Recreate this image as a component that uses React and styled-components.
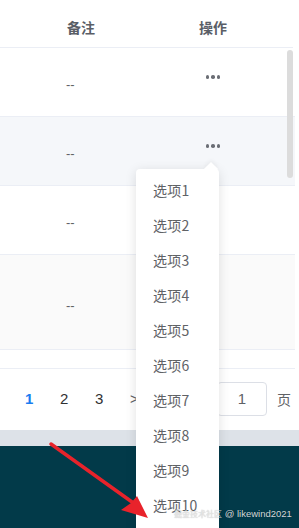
import React from "react";
import styled, { createGlobalStyle } from "styled-components";

const Global = createGlobalStyle`
  html, body { margin: 0; padding: 0; background: #fff; }
  body { width: 299px; height: 528px; overflow: hidden; font-family: "Noto Sans CJK SC", "Noto Sans", sans-serif; }
`;

const Page = styled.div`
  position: relative;
  width: 299px;
  height: 528px;
  overflow: hidden;
  display: flex;
  flex-direction: column;
`;

const Table = styled.div`
  position: relative;
  width: 295px;
  display: flex;
  flex-direction: column;
`;

const Row = styled.div`
  display: grid;
  grid-template-columns: 162px 102px 1fr;
  height: ${(p) => p.$h}px;
  align-items: center;
  background: ${(p) => p.$bg || "#fff"};
  border-bottom: 1px solid #ebeef5;
  box-sizing: border-box;
`;

const HeadRow = styled(Row)`
  width: 293px;
`;

const HeadCell = styled.div`
  text-align: center;
  font-size: 14px;
  font-weight: 700;
  color: #5a5e66;
  padding-top: 6px;
`;

const Cell = styled.div`
  text-align: left;
  padding-left: 66px;
  font-family: "Liberation Sans", sans-serif;
  font-size: 13px;
  color: #606266;
  padding-top: ${(p) => p.$pt || 0}px;
`;

const Dots = styled.div`
  display: flex;
  justify-content: center;
  gap: 2px;
  margin-bottom: ${(p) => p.$mb || 0}px;
  span {
    width: 3.5px;
    height: 3.5px;
    border-radius: 50%;
    background: #6b6e75;
  }
`;

const Scrollbar = styled.div`
  position: absolute;
  left: 287px;
  top: 50px;
  width: 6px;
  height: 128px;
  border-radius: 3px;
  background: #dcdcdc;
`;

const Spacer = styled.div`
  height: 19px;
  border-bottom: 1px solid #ebeef5;
  box-sizing: border-box;
  width: 295px;
`;

const Pager = styled.div`
  height: 61px;
  box-sizing: border-box;
  padding-bottom: 2px;
  display: flex;
  align-items: center;
  padding-left: 25px;
  font-family: "Liberation Sans", sans-serif;
  font-size: 15px;
  color: #303133;
`;

const PageNum = styled.span`
  width: 35px;
  color: ${(p) => (p.$active ? "#1a7cf0" : "#303133")};
  font-weight: ${(p) => (p.$active ? 700 : 400)};
`;

const Chevron = styled.span`
  width: 87px;
  color: #606266;
  font-size: 14px;
`;

const Jump = styled.div`
  width: 50px;
  height: 34px;
  box-sizing: border-box;
  border: 1px solid #dcdfe6;
  border-radius: 4px;
  display: flex;
  align-items: center;
  justify-content: center;
  font-size: 15px;
  color: #606266;
  margin-right: 10px;
`;

const Ye = styled.span`
  font-family: "Noto Sans CJK SC", sans-serif;
  font-size: 14px;
  color: #606266;
`;

const GreyBand = styled.div`
  height: 16px;
  background: #dde2e8;
`;

const Dark = styled.div`
  flex: 1;
  background: #023a49;
`;

const Menu = styled.div`
  position: absolute;
  left: 136px;
  top: 169px;
  width: 83px;
  padding: 4px 0 20px;
  background: #fff;
  border-radius: 4px;
  box-shadow: 0 2px 12px rgba(0, 0, 0, 0.12);
  font-size: 14px;
  color: #606266;
  &::before {
    content: "";
    position: absolute;
    right: 3px;
    top: -5px;
    width: 10px;
    height: 10px;
    background: #fff;
    transform: rotate(45deg);
    box-shadow: -2px -2px 4px rgba(0, 0, 0, 0.04);
  }
`;

const Item = styled.div`
  position: relative;
  height: 35px;
  line-height: 35px;
  padding-left: 17px;
  font-family: "Noto Sans CJK SC", sans-serif;
  letter-spacing: 0.2px;
`;

const Watermark = styled.div`
  position: absolute;
  left: 174px;
  top: 508px;
  font-family: "Liberation Sans", "Noto Sans CJK SC", sans-serif;
  font-size: 9.5px;
  color: rgba(235, 235, 235, 0.9);
  white-space: nowrap;
  text-shadow: 0 0 1px rgba(0, 0, 0, 0.3);
`;

const WmCjk = styled.span`
  font-family: "Noto Sans CJK SC", sans-serif;
  font-size: 8px;
`;

const ArrowSvg = styled.svg`
  position: absolute;
  left: 0;
  top: 0;
  pointer-events: none;
`;

export default function App() {
  return (
    <Page>
      <Global />
      <Table>
        <HeadRow $h={48}>
          <HeadCell>备注</HeadCell>
          <HeadCell>操作</HeadCell>
          <div />
        </HeadRow>
        <Row $h={69} $bg="#fff">
          <Cell $pt={4}>--</Cell>
          <Dots $mb={10}><span /><span /><span /></Dots>
          <div />
        </Row>
        <Row $h={69} $bg="#f5f7fa">
          <Cell $pt={4}>--</Cell>
          <Dots $mb={10}><span /><span /><span /></Dots>
          <div />
        </Row>
        <Row $h={69} $bg="#fff">
          <Cell $pt={4}>--</Cell>
          <div />
          <div />
        </Row>
        <Row $h={95} $bg="#fafafa">
          <Cell $pt={6}>--</Cell>
          <div />
          <div />
        </Row>
        <Spacer />
        <Scrollbar />
      </Table>
      <Pager>
        <PageNum $active>1</PageNum>
        <PageNum>2</PageNum>
        <PageNum>3</PageNum>
        <Chevron>&gt;</Chevron>
        <Jump>1</Jump>
        <Ye>页</Ye>
      </Pager>
      <GreyBand />
      <Dark />
      <Menu>
        {Array.from({ length: 10 }, (_, i) => (
          <Item key={i}>选项{i + 1}</Item>
        ))}
      </Menu>
      <ArrowSvg width="299" height="528" viewBox="0 0 299 528">
        <line x1="51" y1="444" x2="132" y2="502" stroke="#e8232b" strokeWidth="3.5" strokeLinecap="round" />
        <polygon points="148,518 121,510 131,503 137,496" fill="#e8232b" />
      </ArrowSvg>
      <Watermark><WmCjk>掘金技术社区</WmCjk> @ likewind2021</Watermark>
    </Page>
  );
}
